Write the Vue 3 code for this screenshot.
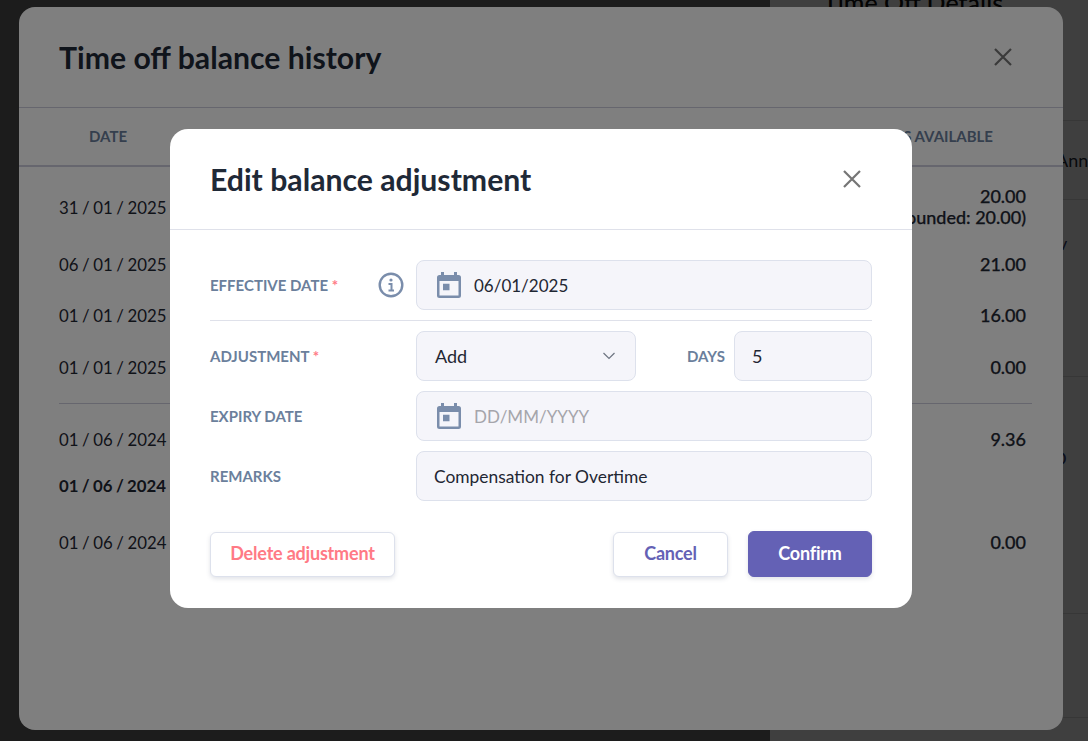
<script setup>
const rows = [
  { date: '31 / 01 / 2025', value: '20.00', note: '(Rounded: 20.00)' },
  { date: '06 / 01 / 2025', value: '21.00' },
  { date: '01 / 01 / 2025', value: '16.00' },
  { date: '01 / 01 / 2025', value: '0.00', divider: true },
  { date: '01 / 06 / 2024', value: '9.36' },
  { date: '01 / 06 / 2024', value: '', bold: true },
  { date: '01 / 06 / 2024', value: '0.00' }
]
</script>

<template>
  <div class="stage">
    <div class="page-left"></div>
    <aside class="panel">
      <h2 class="panel-title">Time Off Details</h2>
      <div class="panel-row row-a"></div>
      <div class="panel-row row-b"><span>Annual Leave</span></div>
      <div class="panel-row row-c"><span class="blue">v</span></div>
      <div class="panel-row row-d"><span class="blue">D</span></div>
      <div class="panel-row row-e"></div>
    </aside>

    <div class="overlay overlay-outer">
      <section class="history">
        <header class="history-head">
          <h1>Time off balance history</h1>
          <svg class="close" width="20" height="20" viewBox="0 0 20 20"><path d="M2 2 18 18M18 2 2 18" /></svg>
        </header>
        <div class="history-cols">
          <span>DATE</span>
          <span>DAYS AVAILABLE</span>
        </div>
        <div class="history-body">
          <template v-for="row in rows" :key="row.date + row.value">
            <div class="h-row" :class="{ bold: row.bold }">
              <span class="h-date">{{ row.date }}</span>
              <span class="h-val">{{ row.value }}<template v-if="row.note"><br />{{ row.note }}</template></span>
            </div>
            <hr v-if="row.divider" class="h-divider" />
          </template>
        </div>
      </section>
    </div>

    <div class="overlay overlay-inner">
      <section class="dialog">
        <header class="dialog-head">
          <h1>Edit balance adjustment</h1>
          <svg class="close" width="20" height="20" viewBox="0 0 20 20"><path d="M2 2 18 18M18 2 2 18" /></svg>
        </header>
        <div class="dialog-body">
          <div class="field">
            <label class="lbl">EFFECTIVE DATE <i>*</i></label>
            <svg class="info" width="26" height="26" viewBox="0 0 26 26">
              <circle cx="13" cy="13" r="11.300" fill="none" stroke="#7a8dab" stroke-width="2.400" />
              <circle cx="13" cy="8" r="1.600" fill="#7a8dab" />
              <path d="M10.500 12h3v6.500M10.500 18.500h5.500" fill="none" stroke="#7a8dab" stroke-width="2" />
            </svg>
            <div class="input date">
              <svg class="cal" width="24" height="26" viewBox="0 0 24 26">
                <path fill-rule="evenodd" fill="#7a8dab" d="M4 0h3v3h10V0h3v3h1.500A2.500 2.500 0 0 1 24 5.500v18a2.500 2.500 0 0 1-2.500 2.500h-19A2.500 2.500 0 0 1 0 23.500v-18A2.500 2.500 0 0 1 2.500 3H4ZM2.500 9v14.500h19V9ZM6 11.700h6.500v6.600H6Z" />
              </svg>
              <span>06/01/2025</span>
            </div>
          </div>
          <hr class="sep" />
          <div class="field">
            <label class="lbl">ADJUSTMENT <i>*</i></label>
            <div class="input select">
              <span>Add</span>
              <svg width="14" height="8" viewBox="0 0 14 8"><path d="M1.500 1 7 6.500 12.500 1" fill="none" stroke="#6d7480" stroke-width="1.200" /></svg>
            </div>
            <label class="lbl days">DAYS</label>
            <div class="input num">5</div>
          </div>
          <div class="field">
            <label class="lbl">EXPIRY DATE</label>
            <div class="input date">
              <svg class="cal" width="24" height="26" viewBox="0 0 24 26">
                <path fill-rule="evenodd" fill="#7a8dab" d="M4 0h3v3h10V0h3v3h1.500A2.500 2.500 0 0 1 24 5.500v18a2.500 2.500 0 0 1-2.500 2.500h-19A2.500 2.500 0 0 1 0 23.500v-18A2.500 2.500 0 0 1 2.500 3H4ZM2.500 9v14.500h19V9ZM6 11.700h6.500v6.600H6Z" />
              </svg>
              <span class="ph">DD/MM/YYYY</span>
            </div>
          </div>
          <div class="field">
            <label class="lbl">REMARKS</label>
            <div class="input text">Compensation for Overtime</div>
          </div>
          <footer class="actions">
            <button class="btn danger">Delete adjustment</button>
            <span class="spacer"></span>
            <button class="btn cancel">Cancel</button>
            <button class="btn primary">Confirm</button>
          </footer>
        </div>
      </section>
    </div>
  </div>
</template>

<style>
html, body { margin: 0; }
</style>

<style scoped>
.stage {
  position: relative;
  width: 1088px;
  height: 741px;
  overflow: hidden;
  display: flex;
  font-family: Lato, "Liberation Sans", sans-serif;
  color: #1f2733;
}
.page-left { width: 770px; flex: none; background: #707070; }
.panel { flex: 1; min-width: 0; background: #fff; display: flex; flex-direction: column; overflow: hidden; }
.panel-title {
  margin: -13px 0 0 53px;
  font-size: 25px;
  font-weight: 500;
  line-height: 30px;
  height: 30px;
  white-space: nowrap;
  color: #111;
}
.panel-row { border-bottom: 1px solid #ddd; white-space: nowrap; font-size: 18px; box-sizing: border-box; }
.row-a { height: 104px; }
.row-b { height: 79px; padding-top: 28px; padding-left: 286px; }
.row-c { height: 177px; padding-top: 32px; padding-left: 288px; }
.row-d { height: 237px; padding-top: 70px; padding-left: 283px; }
.row-e { height: 104px; }
.blue { color: #333b6b; }

.overlay { position: absolute; inset: 0; background: rgba(0, 0, 0, 0.5); display: flex; align-items: flex-start; box-sizing: border-box; }
.overlay-outer { padding: 7px 25px 11px 19px; }
.overlay-inner { padding: 129px 176px 133px 170px; }

.history { width: 100%; height: 100%; background: #fff; border-radius: 16px; display: flex; flex-direction: column; overflow: hidden; }
.history-head { height: 100px; flex: none; display: flex; align-items: center; justify-content: space-between; padding: 0 50px 0 40px; border-bottom: 1px solid #ccd; }
h1 { margin: 0; font-size: 30.2px; font-weight: 700; color: #1f2937; white-space: nowrap; }
.close { fill: none; stroke: #757575; stroke-width: 2.200; flex: none; }
.history-cols { height: 59px; flex: none; box-sizing: border-box; display: flex; align-items: center; justify-content: space-between; padding: 0 70px 1px; border-bottom: 2px solid #ccd; font-size: 15px; font-weight: 700; color: #6b7f9c; }
.history-body { display: flex; flex-direction: column; padding: 28px 37px 0 40px; }
.h-row { height: 24px; display: flex; align-items: center; justify-content: space-between; font-size: 18px; white-space: nowrap; }
.h-row.bold { font-weight: 700; }
.h-date { font-size: 16.8px; word-spacing: -0.7px; }
.h-row + .h-row { margin-top: 28px; }
.h-row:nth-child(2) { margin-top: 33px; }
.h-row:nth-child(3) { margin-top: 27px; }
.h-val { text-align: right; font-weight: 500; line-height: 21px; font-size: 18px; -webkit-text-stroke: 0.25px currentColor; }
.h-divider { border: 0; border-top: 1px solid #ccd; margin: 24px -6px 23px 0; }
.h-divider + .h-row + .h-row { margin-top: 22px; }
.h-divider + .h-row + .h-row + .h-row { margin-top: 33px; }

.dialog { width: 742px; height: 479px; background: #fff; border-radius: 18px; overflow: hidden; flex: none; }
.dialog-head { height: 100px; display: flex; align-items: center; justify-content: space-between; padding: 0 50px 0 40px; border-bottom: 1px solid #dfe1ea; }
.dialog-body { padding: 30px 40px 0; display: flex; flex-direction: column; gap: 10px; }
.field { display: flex; align-items: center; height: 50px; }
.lbl { width: 206px; flex: none; font-size: 15px; font-weight: 700; color: #6b7f9c; white-space: nowrap; }
.lbl i { font-style: normal; color: #ff7a85; font-weight: 700; }
.info { margin-left: -38px; margin-right: 12px; flex: none; }
.input { height: 50px; box-sizing: border-box; background: #f5f5fa; border: 1px solid #dde1ec; border-radius: 8px; display: flex; align-items: center; font-size: 18px; color: #1f2733; flex: none; }
.date, .text { width: 456px; }
.date { padding-left: 20px; gap: 13px; font-size: 17px; }
.cal { flex: none; }
.ph { color: #a5a5ab; }
.text { padding-left: 17px; font-size: 17.4px; }
.select { width: 220px; padding: 0 19px 0 18px; justify-content: space-between; }
.days { width: auto; margin-left: 51px; margin-right: 9px; }
.num { width: 138px; padding-left: 17px; }
.sep { border: 0; border-top: 1px solid #dfe1ea; margin: 0; }
.actions { display: flex; align-items: flex-end; height: 46px; margin-top: 20px; gap: 20px; }
.spacer { flex: 1; }
.btn { font-family: inherit; font-size: 18px; font-weight: 700; border-radius: 6px; box-sizing: border-box; background: #fff; border: 1px solid #dde1ec; box-shadow: 0 2px 4px rgba(90, 100, 130, 0.18); padding: 0 0 3px; height: 45px; letter-spacing: -0.2px; cursor: pointer; }
.danger { width: 185px; color: #ff7a85; }
.cancel { width: 115px; color: #6461b5; }
.primary { width: 124px; height: 46px; background: #6461b5; border-color: #6461b5; color: #fff; }
</style>
